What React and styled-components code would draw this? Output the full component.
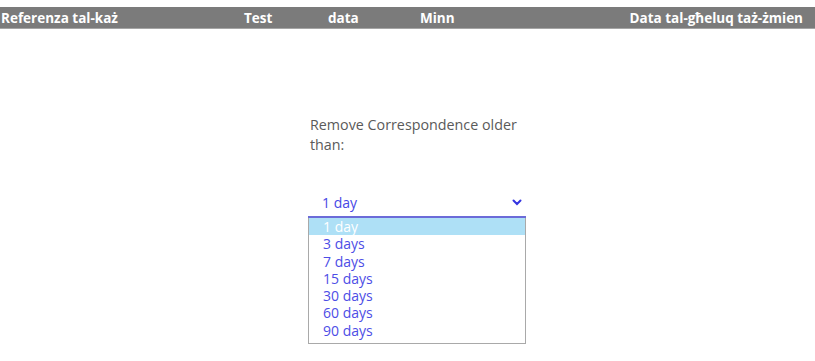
import React, { useState } from "react";
import styled, { createGlobalStyle } from "styled-components";

const GlobalStyle = createGlobalStyle`
  body {
    margin: 0;
    background: #ffffff;
    font-family: "Open Sans", "Lato", sans-serif;
  }
`;

const Page = styled.div`
  padding-top: 7px;
  width: 815px;
  height: 354px;
`;

const HeaderBar = styled.div`
  display: grid;
  grid-template-columns: 243px 84px 92px 1fr auto;
  align-items: center;
  height: 21px;
  padding: 0 12px 0 1px;
  background: #7b7b7b;
  border-bottom: 1px solid #a5a5a5;
  color: #ffffff;
  font-weight: 700;
  font-size: 13.5px;
`;

const HeaderCell = styled.div`
  text-align: ${(p) => (p.$right ? "right" : "left")};
  white-space: nowrap;
`;

const Panel = styled.div`
  width: 218px;
  margin: 86px 0 0 308px;
`;

const Label = styled.div`
  padding-left: 2px;
  width: 216px;
  color: #5a5a5a;
  font-size: 14.3px;
  line-height: 19.5px;
`;

const Select = styled.div`
  margin-top: 34px;
  height: 28px;
  display: flex;
  align-items: center;
  justify-content: space-between;
  padding: 0 4px 0 14px;
  border-bottom: 2px solid #6b6bd8;
  color: #4747e6;
  font-size: 14px;
`;

const ListBox = styled.div`
  display: flex;
  flex-direction: column;
  border: 1px solid #a9a9a9;
  border-top: none;
  padding-bottom: 4px;
`;

const Option = styled.div`
  height: 17.3px;
  line-height: 17px;
  padding-left: 14px;
  font-size: 14px;
  color: ${(p) => (p.$active ? "#ffffff" : "#4d4de6")};
  background: ${(p) => (p.$active ? "#aee0f6" : "transparent")};
`;

const Chevron = () => (
  <svg width="10" height="7" viewBox="0 0 10 7">
    <path d="M1.5 1.5 L5 5 L8.5 1.5" fill="none" stroke="#3434e0" strokeWidth="2" strokeLinecap="round" />
  </svg>
);

const options = ["1 day", "3 days", "7 days", "15 days", "30 days", "60 days", "90 days"];

const App = () => {
  const [value] = useState("1 day");

  return (
    <>
      <GlobalStyle />
      <Page>
        <HeaderBar>
          <HeaderCell>Referenza tal-każ</HeaderCell>
          <HeaderCell>Test</HeaderCell>
          <HeaderCell>data</HeaderCell>
          <HeaderCell>Minn</HeaderCell>
          <HeaderCell $right>Data tal-għeluq taż-żmien</HeaderCell>
        </HeaderBar>
        <Panel>
          <Label>Remove Correspondence older than:</Label>
          <Select>
            <span>{value}</span>
            <Chevron />
          </Select>
          <ListBox>
            {options.map((o) => (
              <Option key={o} $active={o === value}>{o}</Option>
            ))}
          </ListBox>
        </Panel>
      </Page>
    </>
  );
};

export default App;
